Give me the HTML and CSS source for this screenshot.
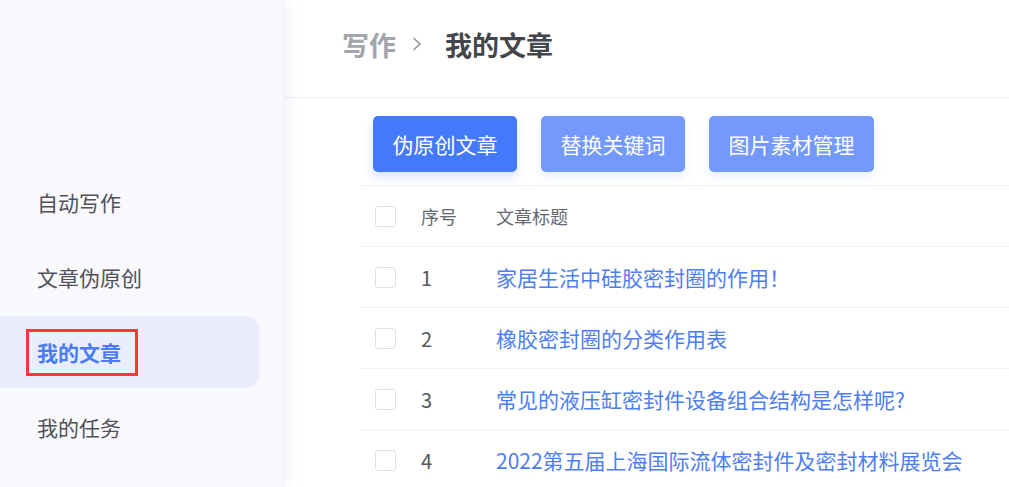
FILE: index.html
```html
<!DOCTYPE html>
<html lang="zh-CN">
<head>
<meta charset="utf-8">
<title>我的文章</title>
<link rel="stylesheet" href="styles.css">
</head>
<body>
<div class="app">
  <aside class="sidebar">
    <nav class="menu">
      <div class="menu-item">自动写作</div>
      <div class="menu-item">文章伪原创</div>
      <div class="menu-item active"><span class="mark">我的文章</span></div>
      <div class="menu-item">我的任务</div>
    </nav>
  </aside>
  <main class="main">
    <header class="header">
      <span class="crumb-parent">写作</span>
      <svg class="crumb-sep" width="12" height="16" viewBox="0 0 12 16"><path d="M2.5 2 L9 8 L2.5 14" fill="none" stroke="#8a8d92" stroke-width="1.4"/></svg>
      <span class="crumb-current">我的文章</span>
    </header>
    <section class="content">
      <div class="toolbar">
        <button class="btn btn-primary">伪原创文章</button>
        <button class="btn btn-light">替换关键词</button>
        <button class="btn btn-light">图片素材管理</button>
      </div>
      <div class="table">
        <div class="row head">
          <span class="check"></span>
          <span class="num">序号</span>
          <span class="title">文章标题</span>
        </div>
        <div class="row">
          <span class="check"></span>
          <span class="num">1</span>
          <span class="title">家居生活中硅胶密封圈的作用！</span>
        </div>
        <div class="row">
          <span class="check"></span>
          <span class="num">2</span>
          <span class="title">橡胶密封圈的分类作用表</span>
        </div>
        <div class="row">
          <span class="check"></span>
          <span class="num">3</span>
          <span class="title">常见的液压缸密封件设备组合结构是怎样呢?</span>
        </div>
        <div class="row">
          <span class="check"></span>
          <span class="num">4</span>
          <span class="title">2022第五届上海国际流体密封件及密封材料展览会</span>
        </div>
      </div>
    </section>
  </main>
</div>
</body>
</html>
```

FILE: styles.css
```css
* { box-sizing: border-box; }
html, body { margin: 0; padding: 0; }
body {
  font-family: "Noto Sans CJK SC", "Noto Sans", sans-serif;
  background: #ffffff;
  width: 1009px;
  height: 487px;
  overflow: hidden;
}
.app {
  display: flex;
  height: 487px;
}
.sidebar {
  width: 284px;
  flex: none;
  background: #f8f8fd;
  border-right: 1px solid #eeeef6;
  padding-top: 166px;
  position: relative;
  z-index: 1;
  box-shadow: 2px 0 14px rgba(220, 222, 240, 0.45);
}
.menu {
  display: flex;
  flex-direction: column;
  gap: 3px;
}
.menu-item {
  width: 259px;
  height: 72px;
  display: flex;
  align-items: center;
  padding-left: 37px;
  font-size: 21px;
  color: #505257;
  border-radius: 0 12px 12px 0;
}
.menu-item.active {
  background: #eaeefc;
  color: #4a7cf6;
  font-weight: 700;
  padding-left: 26px;
}
.mark {
  display: inline-flex;
  align-items: center;
  height: 47px;
  padding: 0 14px 0 8px;
  border: 3px solid #f5383a;
  line-height: 1;
}
.main {
  flex: 1;
  min-width: 0;
}
.header {
  height: 98px;
  border-bottom: 1px solid #ececf6;
  display: flex;
  align-items: center;
  padding: 0 0 9px 58px;
}
.crumb-parent {
  font-size: 27px;
  font-weight: 700;
  color: #a2a5aa;
}
.crumb-sep {
  margin: 0 22px 0 15px;
}
.crumb-current {
  font-size: 27px;
  font-weight: 700;
  color: #43464b;
}
.content {
  padding: 18px 0 0 77px;
}
.toolbar {
  display: flex;
  gap: 24px;
  padding-left: 12px;
  margin-bottom: 13px;
}
.btn {
  height: 56px;
  padding: 0 19.5px;
  border: none;
  border-radius: 5px;
  font-family: inherit;
  font-size: 21px;
  color: #ffffff;
  cursor: pointer;
}
.btn-primary {
  background: #4479fa;
  box-shadow: 0 5px 10px rgba(68, 121, 250, 0.22);
}
.btn-light {
  background: #7299fb;
  box-shadow: 0 5px 10px rgba(114, 153, 251, 0.16);
}
.table {
  border-top: 1px solid #eff0f7;
}
.row {
  display: grid;
  grid-template-columns: 46px 75px 1fr;
  align-items: center;
  height: 61px;
  padding-left: 14px;
  border-bottom: 1px solid #eff0f7;
}
.check {
  width: 21px;
  height: 21px;
  border: 1px solid #dcdfe6;
  border-radius: 3px;
  background: #fff;
}
.num {
  font-size: 20px;
  color: #55585d;
}
.title {
  font-size: 21px;
  color: #4d7ef4;
  white-space: nowrap;
}
.row.head .num,
.row.head .title {
  font-size: 18px;
  color: #66696e;
}
```
